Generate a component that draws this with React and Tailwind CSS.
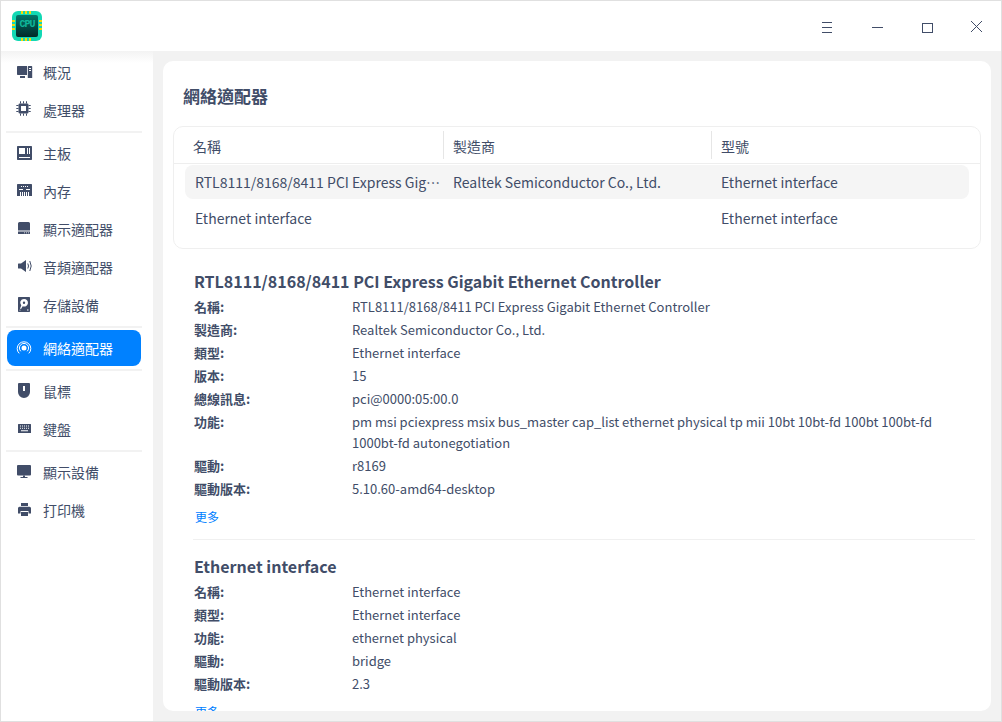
const navGroups = [
  [
    { label: "概況", icon: "overview" },
    { label: "處理器", icon: "cpu" },
  ],
  [
    { label: "主板", icon: "board" },
    { label: "內存", icon: "memory" },
    { label: "顯示適配器", icon: "gpu" },
    { label: "音頻適配器", icon: "audio" },
    { label: "存儲設備", icon: "disk" },
  ],
  [{ label: "網絡適配器", icon: "network", active: true }],
  [
    { label: "鼠標", icon: "mouse" },
    { label: "鍵盤", icon: "keyboard" },
  ],
  [
    { label: "顯示設備", icon: "monitor" },
    { label: "打印機", icon: "printer" },
  ],
];

const devices = [
  {
    title: "RTL8111/8168/8411 PCI Express Gigabit Ethernet Controller",
    rows: [
      ["名稱:", "RTL8111/8168/8411 PCI Express Gigabit Ethernet Controller"],
      ["製造商:", "Realtek Semiconductor Co., Ltd."],
      ["類型:", "Ethernet interface"],
      ["版本:", "15"],
      ["總線訊息:", "pci@0000:05:00.0"],
      ["功能:", "pm msi pciexpress msix bus_master cap_list ethernet physical tp mii 10bt 10bt-fd 100bt 100bt-fd 1000bt-fd autonegotiation"],
      ["驅動:", "r8169"],
      ["驅動版本:", "5.10.60-amd64-desktop"],
    ],
  },
  {
    title: "Ethernet interface",
    rows: [
      ["名稱:", "Ethernet interface"],
      ["類型:", "Ethernet interface"],
      ["功能:", "ethernet physical"],
      ["驅動:", "bridge"],
      ["驅動版本:", "2.3"],
    ],
  },
];

function NavIcon({ name }) {
  const common = { width: 16, height: 16, viewBox: "0 0 16 16", fill: "currentColor", className: "overflow-visible shrink-0" };
  switch (name) {
    case "overview":
      return (
        <svg {...common}>
          <path d="M.8 2H10v9H.8a.8.8 0 0 1-.8-.8V2.800A.8.8 0 0 1 .8 2z" />
          <rect x="3" y="12" width="5" height="2" />
          <path fillRule="evenodd" d="M11.500 2h3a.7.7 0 0 1 .7.7V14h-4.400V2.700a.7.7 0 0 1 .7-.7zM12 4v1h2V4zM12 6v1h2V6z" />
        </svg>
      );
    case "cpu":
      return (
        <svg {...common}>
          <path fillRule="evenodd" d="M2.800 1.500h7.400a1.300 1.300 0 0 1 1.300 1.300v7.400a1.300 1.300 0 0 1-1.300 1.300H2.800a1.300 1.300 0 0 1-1.300-1.300V2.800a1.300 1.300 0 0 1 1.300-1.300zM4 4v5h5V4z" />
          <path d="M3-.7h1v2.200H3zM6-.7h1v2.200H6zM9-.7h1v2.200H9zM3 11.500h1v2.200H3zM6 11.500h1v2.200H6zM9 11.500h1v2.200H9zM-.7 3h2.200v1H-.7zM-.7 6h2.200v1H-.7zM-.7 9h2.200v1H-.7zM11.500 3h2.200v1h-2.200zM11.500 6h2.200v1h-2.200zM11.500 9h2.200v1h-2.200z" />
        </svg>
      );
    case "board":
      return (
        <svg {...common}>
          <path fillRule="evenodd" d="M.7 1h13.600a.7.7 0 0 1 .7.7v12.600a.7.7 0 0 1-.7.7H.7a.7.7 0 0 1-.7-.7V1.700A.7.7 0 0 1 .7 1zM2 3v6h6V3zM10 3v6h1V3zM12 3v6h1V3zM2 12v1h11v-1z" />
        </svg>
      );
    case "memory":
      return (
        <svg {...common}>
          <path fillRule="evenodd" d="M.7 1h13.600a.7.7 0 0 1 .7.7V13H0V1.700A.7.7 0 0 1 .7 1zM4 3v1h1V3zM6 3v1h1V3zM8 3v1h1V3zM10 3v1h1V3zM2 6v1h4V6zM9 6v1h4V6zM3 9v4h1V9zM5 9v4h1V9zM7 9v4h1V9zM9 9v4h1V9zM11 9v4h1V9z" />
        </svg>
      );
    case "gpu":
      return (
        <svg {...common}>
          <path fillRule="evenodd" d="M2.500 1h9A1.500 1.500 0 0 1 13 2.500v10a.5.5 0 0 1-.5.5h-11a.5.5 0 0 1-.5-.5v-10A1.500 1.500 0 0 1 2.500 1zM1 9.500v1h12v-1zM7 11.500v.7h1v-.7zM9 11.500v.7h1v-.7zM11 11.500v.7h1v-.7z" />
        </svg>
      );
    case "audio":
      return (
        <svg {...common}>
          <path d="M1.500 4.500H4L9 1v12L4 9.500H1.500A.5.500 0 0 1 1 9V5a.5.500 0 0 1 .5-.5z" />
          <path d="M10.800 4.500q1.400 2.500 0 5M12.800 2q2.800 5 0 10" fill="none" stroke="currentColor" strokeWidth="1" />
        </svg>
      );
    case "disk":
      return (
        <svg {...common}>
          <path fillRule="evenodd" d="M1.700 0h10.600a.7.700 0 0 1 .7.700v13.600a.7.700 0 0 1-.7.700H1.700a.7.700 0 0 1-.7-.7V.7a.7.700 0 0 1 .7-.7zM7 2a3.800 3.800 0 0 0-2.700 6.500L3 11.500l1 .6 1.700-2.800A3.800 3.800 0 1 0 7 2zM7 4.500a1.200 1.200 0 1 1 0 2.400 1.200 1.200 0 0 1 0-2.400zM10 12.500v1h1.500v-1zM2.500 12.800v.8h1v-.8z" />
        </svg>
      );
    case "network":
      return (
        <svg {...common} fill="none" stroke="currentColor" strokeWidth="1">
          <circle cx="7" cy="8" r="2.500" fill="currentColor" stroke="none" />
          <path d="M3.800 11.300a4.600 4.600 0 1 1 6.400 0" />
          <path d="M2.200 13.400a6.800 6.800 0 1 1 9.600 0" />
        </svg>
      );
    case "mouse":
      return (
        <svg {...common}>
          <path fillRule="evenodd" d="M2 0h10a1 1 0 0 1 1 1v8a6 6 0 0 1-12 0V1a1 1 0 0 1 1-1zM6 3v5h2V3z" />
        </svg>
      );
    case "keyboard":
      return (
        <svg {...common}>
          <path fillRule="evenodd" d="M1.500 3h12a.5.5 0 0 1 .5.500V12H1V3.500a.5.5 0 0 1 .5-.5zM3 4.500v1h1v-1zM5 4.500v1h1v-1zM7 4.500v1h1v-1zM9 4.500v1h1v-1zM11 4.500v1h1v-1zM3 6.800v1h1v-1zM5 6.800v1h1v-1zM7 6.800v1h1v-1zM9 6.800v1h1v-1zM11 6.800v1h1v-1zM4 9.300v1h7v-1z" />
        </svg>
      );
    case "monitor":
      return (
        <svg {...common}>
          <path d="M1 1h12a1 1 0 0 1 1 1v8.500a1 1 0 0 1-1 1H1a1 1 0 0 1-1-1V2a1 1 0 0 1 1-1z" />
          <path d="M6 11.500h2V13H6zM3.500 13h7v1h-7z" />
        </svg>
      );
    case "printer":
      return (
        <svg {...common}>
          <path d="M4 1h7v3H4z" />
          <path d="M2.500 4.800h10A1.500 1.500 0 0 1 14 6.300V11.500h-2.500V9h-8v2.500H1V6.300a1.500 1.500 0 0 1 1.500-1.500z" />
          <rect x="4" y="10" width="7" height="4" />
        </svg>
      );
    default:
      return null;
  }
}

function AppIcon() {
  return (
    <div className="relative w-[30px] h-[30px] rounded-[6px] bg-[#12d8b4] flex items-center justify-center">
      {/* yellow chip pins */}
      <div className="absolute top-0 left-[9px] flex gap-[2px]">
        <span className="w-[2px] h-[3px] bg-[#f5d90a]" />
        <span className="w-[2px] h-[3px] bg-[#f5d90a]" />
        <span className="w-[2px] h-[3px] bg-[#f5d90a]" />
      </div>
      <div className="absolute bottom-0 left-[9px] flex gap-[2px]">
        <span className="w-[2px] h-[3px] bg-[#f5d90a]" />
        <span className="w-[2px] h-[3px] bg-[#f5d90a]" />
        <span className="w-[2px] h-[3px] bg-[#f5d90a]" />
      </div>
      <div className="absolute left-0 top-[9px] flex flex-col gap-[2px]">
        <span className="w-[3px] h-[2px] bg-[#f5d90a]" />
        <span className="w-[3px] h-[2px] bg-[#f5d90a]" />
        <span className="w-[3px] h-[2px] bg-[#f5d90a]" />
      </div>
      <div className="absolute right-0 top-[9px] flex flex-col gap-[2px]">
        <span className="w-[3px] h-[2px] bg-[#f5d90a]" />
        <span className="w-[3px] h-[2px] bg-[#f5d90a]" />
        <span className="w-[3px] h-[2px] bg-[#f5d90a]" />
      </div>
      <div className="w-[22px] h-[22px] rounded-[2px] bg-gradient-to-b from-[#04756a] to-[#012a2a] flex items-start justify-center pt-[3px]">
        <span className="text-[10px] leading-[13px] font-bold tracking-[-1px] text-[#10b79a]" style={{ fontFamily: '"Liberation Mono", monospace' }}>CPU</span>
      </div>
    </div>
  );
}

function TitleBar() {
  return (
    <div className="h-[50px] shrink-0 bg-white flex items-center relative z-10">
      <div className="ml-[11px]">
        <AppIcon />
      </div>
      <div className="ml-auto flex items-center text-[#414d68]">
        <button className="w-[50px] h-[50px] flex items-center justify-center">
          <svg width="14" height="14" viewBox="0 0 14 14" fill="none" stroke="currentColor" strokeWidth="1">
            <path d="M3 3.500h10M3 8.500h10M3 13.500h10" />
          </svg>
        </button>
        <button className="w-[50px] h-[50px] flex items-center justify-center">
          <svg width="14" height="14" viewBox="0 0 14 14" fill="none" stroke="currentColor" strokeWidth="1">
            <path d="M3 8.500h11" />
          </svg>
        </button>
        <button className="w-[50px] h-[50px] flex items-center justify-center">
          <svg width="14" height="14" viewBox="0 0 14 14" fill="none" stroke="currentColor" strokeWidth="1">
            <rect x="3.500" y="4.500" width="10" height="9" />
          </svg>
        </button>
        <button className="w-[50px] h-[50px] flex items-center justify-center">
          <svg width="14" height="14" viewBox="0 0 14 14" fill="none" stroke="currentColor" strokeWidth="1">
            <path d="M2 2l11 11M13 2L2 13" />
          </svg>
        </button>
      </div>
    </div>
  );
}

function Sidebar() {
  return (
    <aside className="w-[152px] shrink-0 flex flex-col pt-[2px] bg-gradient-to-b from-[#f3f3f3] to-white to-[12px]">
      {navGroups.map((group, i) => (
        <div key={i}>
          {i > 0 && (
            <div className="pt-[2px] pb-[1px] pl-[5px] pr-[11px]">
              <div className="h-[2px] bg-[#f2f2f2]" />
            </div>
          )}
          {group.map((item) => (
            <div
              key={item.label}
              className={
                item.active
                  ? "ml-[6px] mr-[12px] h-[36px] my-[1px] rounded-[8px] bg-[#0081ff] text-white flex items-center pl-[10px] gap-[10px]"
                  : "ml-[6px] mr-[12px] h-[38px] text-[#414d68] flex items-center pl-[10px] gap-[10px]"
              }
            >
              <NavIcon name={item.icon} />
              <span className="text-[14px] leading-[20px]">{item.label}</span>
            </div>
          ))}
        </div>
      ))}
    </aside>
  );
}

function DeviceTable() {
  return (
    <div className="mx-[10px] mt-[17px] h-[123px] shrink-0 rounded-[10px] border border-[#efefef] text-[14px] text-[#414d68]">
      <div className="h-[37px] flex items-center border-b border-[#eeeeee]">
        <div className="w-[270px] h-[28px] flex items-center pt-[2px] pl-[19px] border-r border-[#e6e6e6]">名稱</div>
        <div className="w-[268px] h-[28px] flex items-center pt-[2px] pl-[9px] border-r border-[#e6e6e6]">製造商</div>
        <div className="flex-1 pt-[2px] pl-[9px]">型號</div>
      </div>
      <div className="mx-[11px] mt-[1px] h-[34px] rounded-[8px] bg-[#f5f5f5] flex items-center">
        <div className="w-[245px] ml-[10px] mr-[13px] truncate">RTL8111/8168/8411 PCI Express Gigabit Ethernet Controller</div>
        <div className="w-[268px]">Realtek Semiconductor Co., Ltd.</div>
        <div className="flex-1">Ethernet interface</div>
      </div>
      <div className="mx-[11px] mt-[2px] h-[35px] flex items-center">
        <div className="w-[526px] ml-[10px]">Ethernet interface</div>
        <div className="flex-1">Ethernet interface</div>
      </div>
    </div>
  );
}

function DeviceDetail({ device, last }) {
  return (
    <div className={last ? "ml-[30px] mr-[16px] pt-[14px]" : "ml-[30px] mr-[16px] pt-[12px] h-[283px] shrink-0 border-b border-[#f0f0f0]"}>
      <h3 className="pl-[1px] text-[16px] leading-[24px] font-bold text-[#414d68]">{device.title}</h3>
      <div className="mt-[3px]">
        {device.rows.map(([label, value]) => (
          <div key={label} className="flex text-[13px] leading-[21px] mb-[2px] text-[#414d68]">
            <div className="w-[159px] shrink-0 pl-[1px] font-bold">{label}</div>
            <div className="w-[600px]">{value}</div>
          </div>
        ))}
      </div>
      <div className="pl-[2px] mt-[9px] text-[12px] leading-[18px] text-[#0081ff]">更多</div>
    </div>
  );
}

export default function App() {
  return (
    <div
      className="w-[1002px] h-[722px] flex flex-col overflow-hidden bg-[#f2f2f2] border border-[#e0e0e0]"
      style={{ fontFamily: '"Noto Sans CJK TC", "Noto Sans", sans-serif' }}
    >
      <TitleBar />
      <div className="flex flex-1 min-h-0">
        <Sidebar />
        <main className="flex-1 min-w-0 p-[10px]">
          <div className="h-full rounded-[10px] bg-white overflow-hidden flex flex-col">
            <h2 className="pl-[20px] pt-[22px] text-[17px] leading-[26px] font-bold text-[#414d68]">網絡適配器</h2>
            <DeviceTable />
            <div className="mt-[8px]">
              <DeviceDetail device={devices[0]} />
              <DeviceDetail device={devices[1]} last />
            </div>
          </div>
        </main>
      </div>
    </div>
  );
}
